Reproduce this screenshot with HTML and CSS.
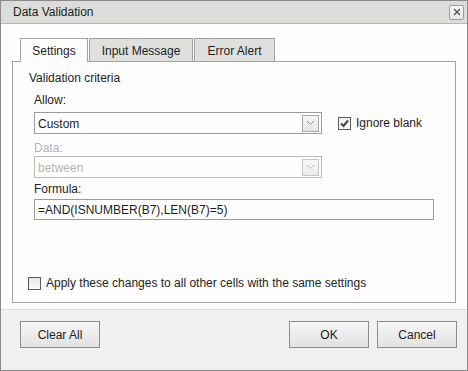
FILE: index.html
```html
<!DOCTYPE html>
<html>
<head>
<meta charset="utf-8">
<link rel="stylesheet" href="styles.css">
</head>
<body>
<div class="window">
  <div class="titlebar">
    <span class="title">Data Validation</span>
    <button class="close" aria-label="Close">
      <svg width="8" height="8" viewBox="0 0 8 8"><path d="M1 1L7 7M7 1L1 7" stroke="#555" stroke-width="1.4"/></svg>
    </button>
  </div>
  <div class="body">
    <div class="tabs">
      <div class="tab tab-settings active">Settings</div>
      <div class="tab tab-input">Input Message</div>
      <div class="tab tab-error">Error Alert</div>
    </div>
    <div class="panel">
      <div class="section-title">Validation criteria</div>
      <div class="fields">
        <div class="label label-allow">Allow:</div>
        <div class="row">
          <div class="select">
            <span class="select-text">Custom</span>
            <span class="arrow"><svg width="9" height="6" viewBox="0 0 9 6"><path d="M1 1L4.5 4.5L8 1" fill="none" stroke="#8a8a8a" stroke-width="1"/></svg></span>
          </div>
          <label class="check check-ignore">
            <span class="box checked"><svg width="9" height="9" viewBox="0 0 9 9"><path d="M1 4.5L3.5 7L8 1.5" fill="none" stroke="#444" stroke-width="2"/></svg></span>
            <span>Ignore blank</span>
          </label>
        </div>
        <div class="label label-data disabled">Data:</div>
        <div class="select disabled">
          <span class="select-text">between</span>
          <span class="arrow"><svg width="9" height="6" viewBox="0 0 9 6"><path d="M1 1L4.5 4.5L8 1" fill="none" stroke="#bdbdbd" stroke-width="1"/></svg></span>
        </div>
        <div class="label label-formula">Formula:</div>
        <div class="input">=AND(ISNUMBER(B7),LEN(B7)=5)</div>
      </div>
      <label class="check check-apply">
        <span class="box"></span>
        <span>Apply these changes to all other cells with the same settings</span>
      </label>
    </div>
  </div>
  <div class="footer">
    <button class="btn">Clear All</button>
    <div class="spacer"></div>
    <button class="btn">OK</button>
    <button class="btn">Cancel</button>
  </div>
</div>
</body>
</html>
```

FILE: styles.css
```css
html, body {
  margin: 0;
  padding: 0;
  background: #ffffff;
}
body {
  font-family: "Liberation Sans", Arial, sans-serif;
  font-size: 12px;
  color: #1e1e1e;
}
.window {
  width: 468px;
  height: 371px;
  box-sizing: border-box;
  border: 1px solid #8a8a8a;
  display: flex;
  flex-direction: column;
  background: #fcfdfc;
}
.titlebar {
  height: 22px;
  border-bottom: 1px solid #b6b7b5;
  background: #dcdddb;
  display: flex;
  align-items: center;
  padding: 0 3px 0 12px;
}
.title {
  flex: 1;
  line-height: 16px;
  color: #222;
}
.close {
  width: 15px;
  height: 15px;
  margin: 0;
  padding: 0;
  border: 1px solid #9c9c9c;
  border-radius: 2px;
  background: linear-gradient(#f7f7f7, #e6e6e6);
  display: flex;
  align-items: center;
  justify-content: center;
}
.body {
  flex: 1;
  padding: 14px 11px 0 11px;
  display: flex;
  flex-direction: column;
}
.tabs {
  display: flex;
  gap: 1px;
  padding-left: 8px;
  height: 23px;
  position: relative;
  z-index: 1;
}
.tab {
  box-sizing: border-box;
  height: 23px;
  border: 1px solid #a2a2a2;
  border-bottom: none;
  background: #dfe0de;
  display: flex;
  align-items: center;
  justify-content: center;
  line-height: 16px;
  padding-top: 1px;
}
.tab.active {
  background: #fcfdfc;
  height: 24px;
}
.tab-settings { width: 68px; }
.tab-input { width: 104px; }
.tab-error { width: 81px; }
.panel {
  box-sizing: border-box;
  height: 242px;
  border: 1px solid #a2a2a2;
  padding: 8px 0 0 16px;
}
.section-title {
  line-height: 16px;
}
.fields {
  padding-left: 5px;
}
.label {
  line-height: 16px;
}
.label-allow { margin-top: 6px; }
.label-data { margin-top: 6px; }
.label-formula { margin-top: 3px; }
.disabled { color: #b4b4b4; }
.row {
  display: flex;
  align-items: center;
  margin-top: 4px;
}
.select {
  box-sizing: border-box;
  width: 288px;
  height: 22px;
  border: 1px solid #9c9c9c;
  background: #fdfefd;
  display: flex;
  align-items: center;
  padding: 0 2px 0 3px;
}
.select.disabled {
  border-color: #b9b9b9;
}
.select-text {
  flex: 1;
  line-height: 16px;
  padding-top: 2px;
}
.arrow {
  box-sizing: border-box;
  width: 17px;
  height: 17px;
  border: 1px solid #a9a9a9;
  background: linear-gradient(#f6f6f6, #e4e4e4);
  display: flex;
  align-items: center;
  justify-content: center;
}
.select.disabled .arrow {
  border-color: #c6c6c6;
  background: linear-gradient(#f8f8f8, #ececec);
}
.check {
  display: flex;
  align-items: center;
  gap: 5px;
  line-height: 16px;
}
.check-ignore {
  margin-left: 16px;
}
.box {
  box-sizing: border-box;
  width: 13px;
  height: 13px;
  border: 1px solid #5a5a5a;
  background: linear-gradient(#e6e6e6, #fbfbfb);
  display: flex;
  align-items: center;
  justify-content: center;
}
.box.checked {
  background: linear-gradient(#f0f0f0, #ffffff);
}
.input {
  box-sizing: border-box;
  width: 400px;
  height: 21px;
  margin-top: 2px;
  border: 1px solid #9c9c9c;
  background: #fdfefd;
  padding: 2px 3px 0 3px;
  line-height: 17px;
}
.check-apply {
  margin-top: 55px;
  margin-left: -1px;
}
.footer {
  height: 49px;
  border-top: 1px solid #dcdcdc;
  background: #f0f0f0;
  display: flex;
  align-items: flex-start;
  padding: 11px 10px 0 19px;
  gap: 8px;
}
.spacer { flex: 1; }
.btn {
  box-sizing: border-box;
  width: 80px;
  height: 27px;
  margin: 0;
  border: 1px solid #8d8d8d;
  background: linear-gradient(#f6f6f6, #e2e2e2);
  font-family: "Liberation Sans", Arial, sans-serif;
  font-size: 12px;
  color: #222;
  padding: 0;
}
```
